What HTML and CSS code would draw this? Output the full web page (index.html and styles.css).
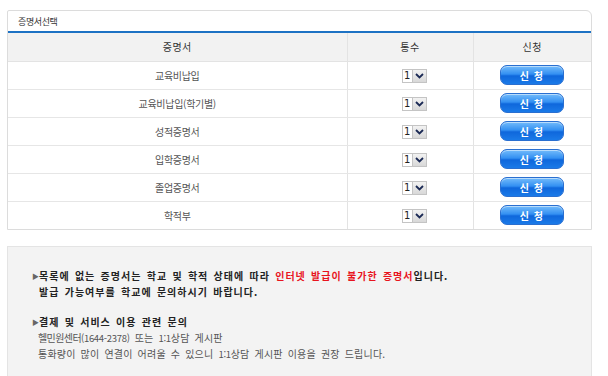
FILE: index.html
```html
<!DOCTYPE html>
<html lang="ko">
<head>
<meta charset="utf-8">
<link rel="stylesheet" href="styles.css">
</head>
<body>
<div class="page">
  <section class="panel">
    <div class="panel-title">증명서선택</div>
    <table class="cert-table">
      <thead>
        <tr><th class="c-name">증명서</th><th class="c-qty">통수</th><th class="c-apply">신청</th></tr>
      </thead>
      <tbody>
        <tr><td>교육비납입</td><td><span class="sel"><span class="sel-val">1</span><span class="sel-btn"><svg width="9" height="6" viewBox="0 0 9 6"><path d="M1 1 L4.5 4.5 L8 1" fill="none" stroke="#1b2a55" stroke-width="1.8"/></svg></span></span></td><td><button class="apply">신 청</button></td></tr>
        <tr><td>교육비납입(학기별)</td><td><span class="sel"><span class="sel-val">1</span><span class="sel-btn"><svg width="9" height="6" viewBox="0 0 9 6"><path d="M1 1 L4.5 4.5 L8 1" fill="none" stroke="#1b2a55" stroke-width="1.8"/></svg></span></span></td><td><button class="apply">신 청</button></td></tr>
        <tr><td>성적증명서</td><td><span class="sel"><span class="sel-val">1</span><span class="sel-btn"><svg width="9" height="6" viewBox="0 0 9 6"><path d="M1 1 L4.5 4.5 L8 1" fill="none" stroke="#1b2a55" stroke-width="1.8"/></svg></span></span></td><td><button class="apply">신 청</button></td></tr>
        <tr><td>입학증명서</td><td><span class="sel"><span class="sel-val">1</span><span class="sel-btn"><svg width="9" height="6" viewBox="0 0 9 6"><path d="M1 1 L4.5 4.5 L8 1" fill="none" stroke="#1b2a55" stroke-width="1.8"/></svg></span></span></td><td><button class="apply">신 청</button></td></tr>
        <tr><td>졸업증명서</td><td><span class="sel"><span class="sel-val">1</span><span class="sel-btn"><svg width="9" height="6" viewBox="0 0 9 6"><path d="M1 1 L4.5 4.5 L8 1" fill="none" stroke="#1b2a55" stroke-width="1.8"/></svg></span></span></td><td><button class="apply">신 청</button></td></tr>
        <tr><td>학적부</td><td><span class="sel"><span class="sel-val">1</span><span class="sel-btn"><svg width="9" height="6" viewBox="0 0 9 6"><path d="M1 1 L4.5 4.5 L8 1" fill="none" stroke="#1b2a55" stroke-width="1.8"/></svg></span></span></td><td><button class="apply">신 청</button></td></tr>
      </tbody>
    </table>
  </section>

  <section class="notice">
    <p class="strong"><span class="tri">▶</span>목록에 없는 증명서는 학교 및 학적 상태에 따라 <em>인터넷 발급이 불가한 증명서</em>입니다.</p>
    <p class="strong indent">발급 가능여부를 학교에 문의하시기 바랍니다.</p>
    <p class="strong gap"><span class="tri">▶</span>결제 및 서비스 이용 관련 문의</p>
    <p class="plain"><span class="tight">헬민원센터</span><span class="num">(1644-2378)</span> 또는 <span class="num">1:1</span>상담 게시판</p>
    <p class="plain">통화량이 많이 연결이 어려울 수 있으니 <span class="num">1:1</span>상담 게시판 이용을 권장 드립니다.</p>
  </section>
</div>
</body>
</html>
```

FILE: styles.css
```css
* { box-sizing: border-box; }
html, body { margin: 0; padding: 0; background: #fff; }
body {
  font-family: "Noto Sans CJK KR", "Noto Sans", sans-serif;
  color: #333;
}
.page {
  padding: 10px 16px 0 7px;
  width: 608px;
}
.panel {
  border: 1px solid #dcdcdc;
  border-top-right-radius: 6px;
  border-top-left-radius: 2px;
  overflow: hidden;
}
.panel-title {
  height: 22px;
  line-height: 22px;
  padding-left: 10px;
  font-size: 9px;
  letter-spacing: -0.4px;
  color: #333;
  border-bottom: 2px solid #1d72c4;
}
.cert-table {
  width: 100%;
  border-collapse: collapse;
  table-layout: fixed;
}
.cert-table th {
  height: 28px;
  background: #f2f2f2;
  font-weight: normal;
  font-size: 10px;
  color: #333;
  border-bottom: 1px solid #e3e3e3;
  letter-spacing: 0.5px;
}
.c-name { width: 339px; }
.c-qty { width: 126px; }
.cert-table th + th, .cert-table td + td { border-left: 1px solid #e3e3e3; }
.cert-table td {
  height: 28px;
  text-align: center;
  font-size: 10px;
  color: #555;
  border-bottom: 1px solid #e6e6e6;
  padding: 0;
  letter-spacing: -0.3px;
}
.cert-table tbody tr:last-child td { border-bottom: none; }
.sel {
  display: inline-flex;
  height: 14px;
  border: 1px solid #c4c4c4;
  margin-left: 9px;
  vertical-align: middle;
}
.sel-val {
  width: 9px;
  font-family: "DejaVu Sans", sans-serif;
  font-size: 10px;
  line-height: 12px;
  color: #222;
  text-align: left;
  padding-left: 1px;
  background: #fff;
}
.sel-btn {
  width: 14px;
  background: linear-gradient(#f2f2f2, #d8d8d8);
  border-left: 1px solid #c4c4c4;
  display: flex;
  align-items: center;
  justify-content: center;
}
.apply {
  width: 64px;
  height: 20px;
  border: 1px solid #2a6fd0;
  border-radius: 7px;
  background: linear-gradient(#74bcfb 0%, #3390f2 45%, #0f67dc 55%, #1a7ae8 100%);
  color: #fff;
  font-family: "Noto Sans CJK KR", sans-serif;
  font-weight: bold;
  font-size: 10px;
  letter-spacing: 1px;
  padding: 0;
  margin-left: -1px;
  vertical-align: middle;
  box-shadow: inset 0 1px 0 rgba(255,255,255,0.5);
}
.notice {
  margin-top: 16px;
  background: #f3f3f3;
  border: 1px solid #e4e4e4;
  height: 140px;
  padding: 21px 0 0 24px;
}
.notice p { margin: 0; line-height: 16px; }
.strong {
  font-size: 10px;
  font-weight: bold;
  color: #222;
  letter-spacing: 1px;
  word-spacing: 1.5px;
}
.strong em { font-style: normal; color: #e8141e; }
.tri {
  display: inline-block;
  width: 7px;
  font-size: 7px;
  color: #666;
  vertical-align: 1px;
  letter-spacing: 0;
}
.indent { padding-left: 7px; }
.gap { margin-top: 14px !important; }
.plain {
  font-size: 10px;
  color: #555;
  padding-left: 6px;
  letter-spacing: 0.2px;
  word-spacing: 2px;
}
.plain .num { font-size: 9.5px; letter-spacing: -0.3px; }
.plain .tight { letter-spacing: -0.6px; }
```
